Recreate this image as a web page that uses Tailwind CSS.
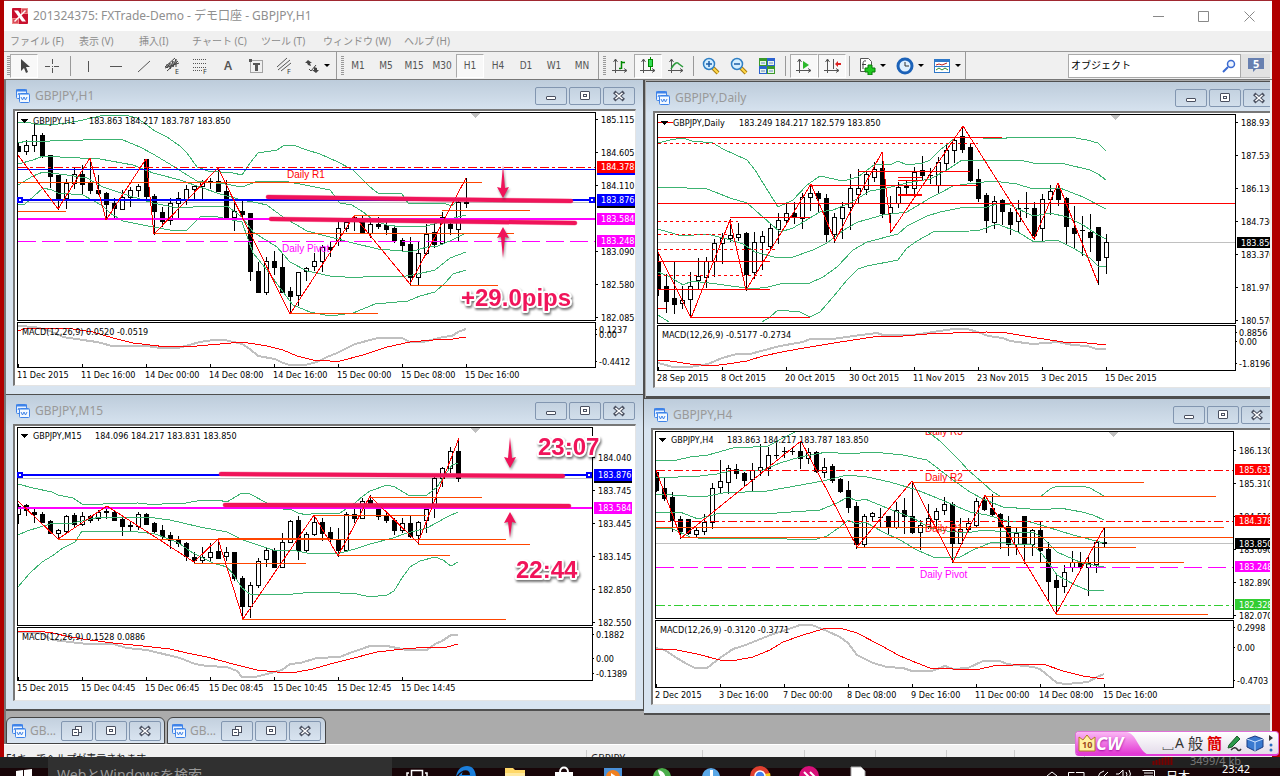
<!DOCTYPE html>
<html lang="ja">
<head>
    <meta charset="UTF-8">
    <meta name="viewport" content="width=device-width, initial-scale=1.0">
    <title>201324375: FXTrade-Demo - GBPJPY,H1</title>
    <script src="https://cdn.jsdelivr.net/npm/@tailwindcss/browser@4"></script>
</head>
<body class="relative h-screen overflow-hidden bg-[#b00000] [font-family:'Noto_Sans','Noto_Sans_CJK_JP',sans-serif]">

    <!-- Shared icons -->
    <svg class="hidden">
        <symbol id="i-chart" viewBox="0 0 14 14">
            <rect x="0.5" y="0.5" width="10" height="9" rx="1" fill="#e8f2ff" stroke="#3f83e8"/>
            <path d="M0 1.5h11" stroke="#3f83e8" stroke-width="2"/>
            <path d="M2 6l1-2 1 2 1-2 1 2 1-1" fill="none" stroke="#3f83e8"/>
            <rect x="3.5" y="4.5" width="10" height="9" rx="1" fill="#f4f9ff" stroke="#3f83e8"/>
            <path d="M4 5.5h9" stroke="#8fbcf5"/>
            <path d="M5 8l1.5 3 1.5-3 1.5 3 1.5-3" fill="none" stroke="#3f83e8"/>
        </symbol>
        <symbol id="i-min" viewBox="0 0 12 12"><rect x="1.5" y="6.5" width="9" height="3" rx="0.5" fill="#fff" stroke="#4a5060"/></symbol>
        <symbol id="i-max" viewBox="0 0 12 12"><rect x="1.5" y="1.5" width="9" height="8" rx="0.5" fill="#fff" stroke="#4a5060"/><rect x="4.5" y="4.5" width="3" height="2" fill="#fff" stroke="#4a5060"/></symbol>
        <symbol id="i-close" viewBox="0 0 12 12"><path d="M2.5 3l7 6M9.5 3l-7 6" stroke="#4a5060" stroke-width="3.6" stroke-linecap="square"/><path d="M2.5 3l7 6M9.5 3l-7 6" stroke="#fff" stroke-width="1.6"/></symbol>
        <symbol id="i-restore" viewBox="0 0 12 12"><rect x="4.5" y="1.5" width="6" height="6" fill="#fff" stroke="#4a5060"/><rect x="1.5" y="4.5" width="6" height="6" fill="#fff" stroke="#4a5060"/><path d="M3 7.5h3" stroke="#4a5060"/></symbol>
        <symbol id="i-axes" viewBox="0 0 18 18"><path d="M4.5 2v14M1 13.5h15M2.5 5l2-3 2 3M13 11.5l3 2-3 2" fill="none" stroke="#555"/></symbol>
        <symbol id="i-lens" viewBox="0 0 18 18"><path d="M11 11l5 5" stroke="#a87c10" stroke-width="4"/><path d="M11 11l5 5" stroke="#ffd84a" stroke-width="2"/><circle cx="7" cy="7" r="5.5" fill="#d4efff" stroke="#2f7fc4" stroke-width="1.5"/></symbol>
    </svg>

    <!-- Terminal window -->
    <div class="ml-1 mr-2 flex h-full flex-col border-t border-[#a02830] bg-[#f0f0f0]">
        <header class="flex h-[30px] shrink-0 items-center bg-white pl-2 text-[#8f8f8f]">
            <svg width="16" height="16" viewBox="0 0 16 16"><rect width="16" height="16" rx="1" fill="#c8102e"/><path d="M0 10h7v6H0zM9 0h7v6H9z" fill="#e88"/><path d="M1 12h5M1 14h5M10 2h5M10 4h5" stroke="#c8102e"/><path d="M2 2.5h4l8 11h-4z" fill="#fff"/><path d="M13.5 2.5L2.5 13.5" stroke="#fff" stroke-width="1.5"/></svg>
            <h1 class="ml-[5px] text-xs">201324375: FXTrade-Demo - デモ口座 - GBPJPY,H1</h1>
            <div class="ml-auto flex">
                <button class="flex h-7 w-[46px] items-center justify-center" aria-label="最小化"><svg width="11" height="11" stroke="#888"><path d="M0 5.5h11"/></svg></button>
                <button class="flex h-7 w-[45px] items-center justify-center" aria-label="最大化"><svg width="11" height="11" fill="none" stroke="#888"><path d="M.5 .5h10v10H.5z"/></svg></button>
                <button class="flex h-7 w-[46px] items-center justify-center" aria-label="閉じる"><svg width="11" height="11" stroke="#888"><path d="M.5 .5l10 10M10.5 .5l-10 10"/></svg></button>
            </div>
        </header>

        <nav class="grid h-5 shrink-0 grid-cols-[69px_60px_53px_69px_62px_81px_60px] items-center pl-1.5 text-[10px] text-[#8c8c8c]">
            <button class="text-left">ファイル (F)</button>
            <button class="text-left">表示 (V)</button>
            <button class="text-left">挿入(I)</button>
            <button class="text-left">チャート (C)</button>
            <button class="text-left">ツール (T)</button>
            <button class="text-left">ウィンドウ (W)</button>
            <button class="text-left">ヘルプ (H)</button>
        </nav>

        <!-- Toolbar -->
        <div class="flex h-[29px] shrink-0 items-center border-t border-b border-t-[#999] border-b-[#777] text-[#555]">
            <i class="ml-[3px] h-5 w-[3px] bg-[repeating-linear-gradient(#999_0_1px,#f0f0f0_1px_2px)]"></i>
            <div class="flex items-center [&_button]:flex [&_button]:h-6 [&_button]:w-7 [&_button]:items-center [&_button]:justify-center">
                <button aria-label="カーソル" class="border border-[#aaa] border-r-white border-b-white bg-[#f8f8f8]"><svg width="18" height="18"><path d="M6 2v12l3-3 2 5 2-1-2-5h4z" fill="#444"/></svg></button>
                <button aria-label="クロスヘア"><svg width="18" height="18" stroke="#555"><path d="M9.5 2v5M9.5 11v5M2 9.5h5M11 9.5h5M9 9.5h1"/></svg></button>
                <i class="mr-[3px] ml-1 h-5 w-px bg-[#999]"></i>
                <button aria-label="垂直線"><svg width="18" height="18" stroke="#555"><path d="M9.5 4v11"/></svg></button>
                <button aria-label="水平線"><svg width="18" height="18" stroke="#555"><path d="M3 9.5h12"/></svg></button>
                <button aria-label="トレンドライン"><svg width="18" height="18" stroke="#555"><path d="M3 15L15 4"/></svg></button>
                <button aria-label="チャネル"><svg width="18" height="20" fill="none" stroke="#444"><path d="M2 11l10-9M4 15l11-10M4 8v4l3-5v6l3-8v6l3-8v8M2 12l14-5"/><text x="12" y="18" font-size="7" fill="#333" stroke="none">E</text></svg></button>
                <button aria-label="フィボナッチ"><svg width="18" height="20" stroke="#555" stroke-dasharray="1 1"><path d="M2 3.5h14M2 7.5h14M2 11.5h14M2 14.5h9"/><text x="12" y="18" font-size="7" fill="#333" stroke="none">F</text></svg></button>
                <button class="text-xs font-semibold">A</button>
                <button aria-label="ラベル"><svg width="18" height="18"><rect x="3.5" y="3.5" width="12" height="12" fill="none" stroke="#555" stroke-dasharray="1 1"/><path d="M2 2h3v3H2z" fill="#555"/><path d="M6 6h7v2h-2v6H8V8H6z" fill="#555"/></svg></button>
                <button aria-label="ファン"><svg width="18" height="20" stroke="#555"><path d="M2 11L12 2M3 14L15 4M6 15L16 7"/><text x="12" y="18" font-size="7" fill="#333" stroke="none">F</text></svg></button>
                <button aria-label="矢印" class="!w-[38px] gap-1"><svg width="16" height="16"><path d="M4 2l4 3-2 0 1 3-3-1-1-2H1zM12 15l-4-3h2V9l3 1v2h2z" fill="#444"/><path d="M5 11l2 2 5-6" fill="none" stroke="#444"/></svg><svg width="6" height="4"><path d="M0 0h6L3 3z"/></svg></button>
            </div>
            <i class="mr-1 h-full w-px bg-[#999]"></i>
            <i class="h-5 w-[3px] bg-[repeating-linear-gradient(#999_0_1px,#f0f0f0_1px_2px)]"></i>
            <div class="flex text-[10px] [font-family:'DejaVu_Sans_Condensed','Noto_Sans',sans-serif] [&_button]:h-6 [&_button]:w-7">
                <button>M1</button><button>M5</button><button>M15</button><button>M30</button>
                <button class="border border-[#aaa] border-r-white border-b-white bg-[#f8f8f8]">H1</button>
                <button>H4</button><button>D1</button><button>W1</button><button>MN</button>
            </div>
            <i class="mr-1 ml-0.5 h-full w-px bg-[#999]"></i>
            <i class="h-5 w-[3px] bg-[repeating-linear-gradient(#999_0_1px,#f0f0f0_1px_2px)]"></i>
            <div class="flex items-center [&_button]:flex [&_button]:h-6 [&_button]:w-7 [&_button]:items-center [&_button]:justify-center">
                <button aria-label="バーチャート"><svg width="18" height="18"><use href="#i-axes"/><path d="M10.5 4v8M8 11.5h2M11 5.5h3" stroke="#080" stroke-width="1.5"/></svg></button>
                <button aria-label="ローソク足" class="border border-[#aaa] border-r-white border-b-white bg-[#f8f8f8]"><svg width="18" height="18"><use href="#i-axes"/><path d="M11.5 0v13" stroke="#080"/><rect x="9.5" y="2.5" width="4" height="7" fill="#3d5" stroke="#080"/></svg></button>
                <button aria-label="ラインチャート"><svg width="18" height="18"><use href="#i-axes"/><path d="M4 12q5-9 8-5l4 3" fill="none" stroke="#2a9a3a" stroke-width="1.5"/></svg></button>
                <i class="mx-[3px] h-5 w-px bg-[#999]"></i>
                <button aria-label="ズームイン"><svg width="18" height="18"><use href="#i-lens"/><path d="M4 7h6M7 4v6" stroke="#1d5fa8" stroke-width="1.5"/></svg></button>
                <button aria-label="ズームアウト"><svg width="18" height="18"><use href="#i-lens"/><path d="M4 7h6" stroke="#1d5fa8" stroke-width="1.5"/></svg></button>
                <button aria-label="整列"><svg width="18" height="18"><path d="M1 1h8v8H1z" fill="#3a9a2a"/><path d="M9 1h8v8H9zM1 9h8v8H1z" fill="#2b62d0"/><path d="M9 9h8v8H9z" fill="#3a9a2a"/><path d="M2 4h6v4H2zM10 4h6v4h-6zM2 12h6v4H2zM10 12h6v4h-6z" fill="#e8f4e8"/><path d="M3 6h4M11 6h4M3 14h4M11 14h4" stroke="#6a8ac0"/></svg></button>
                <i class="mx-1 h-5 w-px bg-[#999]"></i>
                <button aria-label="自動スクロール" class="border border-[#aaa] border-r-white border-b-white bg-[#f8f8f8]"><svg width="18" height="18"><use href="#i-axes"/><path d="M8 4l6 4-6 4z" fill="#2db82d"/></svg></button>
                <button aria-label="チャートシフト" class="border border-[#aaa] border-r-white border-b-white bg-[#f8f8f8]"><svg width="18" height="18"><use href="#i-axes"/><path d="M10.5 2v10" stroke="#555"/><path d="M12 7l3-3v2h3v2h-3v2z" fill="#d22"/></svg></button>
                <i class="mx-[3px] h-5 w-px bg-[#999]"></i>
                <button aria-label="インディケータ" class="!w-[38px] gap-1"><svg width="18" height="18"><path d="M2.5 1.5h8l3 3v10h-11z" fill="#fff" stroke="#555"/><path d="M8 4q-3-1-3 3v5M4 7.5h4" fill="none" stroke="#444"/><path d="M10 8h4v3h3v4h-3v3h-4v-3H7v-4h3z" fill="#1fc81f" stroke="#087808"/></svg><svg width="6" height="4"><path d="M0 0h6L3 3z"/></svg></button>
                <button aria-label="時間足設定" class="!w-[37px] gap-1"><svg width="18" height="18"><circle cx="9" cy="9" r="7" fill="#dff0ff" stroke="#1c62b8" stroke-width="3"/><path d="M9 5v4h4" fill="none" stroke="#333"/></svg><svg width="6" height="4"><path d="M0 0h6L3 3z"/></svg></button>
                <button aria-label="定型チャート" class="!w-[37px] gap-1"><svg width="18" height="16"><rect x="1.5" y="1.5" width="15" height="13" fill="#fff" stroke="#2f78c8"/><path d="M1 2.5h16" stroke="#2f78c8" stroke-width="3"/><path d="M3 7l3-1 3 1 5-2" fill="none" stroke="#b22"/><path d="M3 12l3-2 3 2 3-2 3 2" fill="none" stroke="#2a8a2a"/><path d="M1 8.5h16" stroke="#2f78c8"/></svg><svg width="6" height="4"><path d="M0 0h6L3 3z"/></svg></button>
            </div>
            <i class="h-full w-px bg-[#999]"></i>
            <label class="ml-auto flex h-6 w-[173px] items-center border border-[#aaa] bg-white">
                <input type="text" value="オブジェクト" aria-label="検索" class="w-full min-w-0 flex-1 px-0.5 text-[10px] text-black outline-none">
                <svg class="mr-1 shrink-0" width="14" height="14" fill="none"><circle cx="9" cy="5" r="3.5" fill="#eef4ff" stroke="#3a6ad0" stroke-width="1.5"/><path d="M6 8l-5 5" stroke="#3a6ad0" stroke-width="2"/></svg>
            </label>
            <button aria-label="通知" class="mr-0.5 flex h-6 w-[29px] items-center justify-center border-b border-[#bbb] bg-[#e2e2e2]"><svg width="16" height="16"><path d="M0 1h16v11H8l-3 3v-3H0z" fill="#6880b0"/><text x="5" y="11" font-size="11" font-weight="bold" fill="#fff">5</text></svg></button>
        </div>

        <!-- Chart desktop -->
        <main id="desktop" class="relative mr-0.5 flex-1 overflow-hidden border-l-2 border-[#777] bg-[#ababab]">
            <div class="absolute bottom-0 left-0 flex gap-0.5">
                <section class="flex h-[27px] w-[159px] items-center gap-0.5 rounded-t-md border border-[#444] bg-linear-to-b from-[#c3d0de] to-[#dbe6f2] pl-[5px] text-xs text-[#999]">
                    <svg width="14" height="14"><use href="#i-chart"/></svg><span class="w-[31px] pl-0.5">GB...</span>
                    <button aria-label="元に戻す" class="flex h-5 w-8 items-center justify-center rounded-xs border border-[#8296b0]"><svg width="12" height="12"><use href="#i-restore"/></svg></button>
                    <button aria-label="最大化" class="flex h-5 w-8 items-center justify-center rounded-xs border border-[#8296b0]"><svg width="12" height="12"><use href="#i-max"/></svg></button>
                    <button aria-label="閉じる" class="flex h-5 w-8 items-center justify-center rounded-xs border border-[#8296b0]"><svg width="12" height="12"><use href="#i-close"/></svg></button>
                </section>
                <section class="flex h-[27px] w-[159px] items-center gap-0.5 rounded-t-md border border-[#444] bg-linear-to-b from-[#c3d0de] to-[#dbe6f2] pl-1 text-xs text-[#999]">
                    <svg width="14" height="14"><use href="#i-chart"/></svg><span class="w-[31px] pl-0.5">GB...</span>
                    <button aria-label="元に戻す" class="flex h-5 w-8 items-center justify-center rounded-xs border border-[#8296b0]"><svg width="12" height="12"><use href="#i-restore"/></svg></button>
                    <button aria-label="最大化" class="flex h-5 w-8 items-center justify-center rounded-xs border border-[#8296b0]"><svg width="12" height="12"><use href="#i-max"/></svg></button>
                    <button aria-label="閉じる" class="flex h-5 w-8 items-center justify-center rounded-xs border border-[#8296b0]"><svg width="12" height="12"><use href="#i-close"/></svg></button>
                </section>
            </div>
        </main>

        <footer class="flex h-8 shrink-0 border-t border-white pt-[5px] text-[10px] leading-4 text-[#222]">
            <span class="w-[582px] pl-0.5">F1キーでヘルプが表示されます</span>
            <span class="w-[116px] border-l border-[#ccc] pl-1">GBPJPY</span>
            <span class="w-[102px] border-l border-[#ccc]"></span>
            <span class="w-[71px] border-l border-[#ccc]"></span>
            <span class="w-[71px] border-l border-[#ccc]"></span>
            <span class="w-[68px] border-l border-[#ccc]"></span>
            <span class="w-[70px] border-l border-[#ccc]"></span>
            <span class="flex-1 border-l border-[#ccc]"></span>
        </footer>
    </div>

    <!-- Taskbar -->
    <div class="absolute inset-x-0 bottom-0 flex h-[19px] overflow-hidden bg-[#180508] text-white">
        <div class="absolute inset-x-0 top-0 h-[11px] bg-[#212121]"></div>
        <div class="relative flex w-12 justify-center pt-3"><svg width="16" height="14"><path d="M0 2l7-1v6H0zM8 1l8-1v7H8zM0 8h7v6H0zM8 8h8v6H8z" fill="#fff"/></svg></div>
        <div class="relative w-[344px] bg-[#303030] pt-2 pl-[9px] text-sm text-[#999]">WebとWindowsを検索</div>
        <div class="relative grid w-[490px] grid-cols-10 pt-2 [&_svg]:mx-auto [&_svg]:block [&_svg]:h-6 [&_svg]:w-6">
            <svg viewBox="0 0 24 24" fill="none" stroke="#fff" stroke-width="1.5"><path d="M6.5 5.5h11v14h-11zM4 8H2v10M20 8h2v10"/></svg>
            <svg viewBox="0 0 24 24"><path d="M2 12C3 5 7 1 13 1c6 0 9 5 9 12H8c1 6 8 6 12 4v5C8 26 2 19 4 12c1-2 3-4 5-5-1 1-1 2-1 3h8c0-7-9-6-14 2z" fill="#1b7fdc"/></svg>
            <svg viewBox="0 0 24 24"><path d="M2 3h8l2 2h10v18H2z" fill="#ffd868"/><path d="M2 8h20v15H2z" fill="#ffe9a0"/></svg>
            <svg viewBox="0 0 24 24"><path d="M3 7h18v15H3z" fill="#fff"/><path d="M8 7c0-6 8-6 8 0" fill="none" stroke="#fff" stroke-width="2"/></svg>
            <svg viewBox="0 0 24 24"><path d="M3 3h18v20H3z" fill="#4a90d8"/><circle cx="12" cy="12" r="7" fill="#f08020"/><path d="M10 8l6 4-6 4z" fill="#fff"/></svg>
            <svg viewBox="0 0 24 24"><circle cx="12" cy="12" r="9" fill="#4aae4a"/><path d="M8 5c6 1 8 5 8 12-4-3-7-6-8-12z" fill="#fff"/></svg>
            <svg viewBox="0 0 24 24"><circle cx="12" cy="12" r="9" fill="#5aa8e8"/><path d="M11 5h3v8h-3z" fill="#fff"/></svg>
            <svg viewBox="0 0 24 24"><circle cx="12" cy="11" r="10" fill="#e04030"/><path d="M2 11a10 10 0 0 0 10 10l4-8z" fill="#3aa050"/><path d="M22 8a10 10 0 0 1-10 13l5-12z" fill="#f8c820"/><circle cx="12" cy="11" r="5" fill="#4080f0" stroke="#fff" stroke-width="1.5"/></svg>
            <svg viewBox="0 0 24 24"><circle cx="12" cy="11" r="10" fill="#d8107a"/><path d="M7 7l4 4-4 4M13 7l4 4-4 4" fill="none" stroke="#fff" stroke-width="2"/></svg>
            <svg viewBox="0 0 24 24"><path d="M5 2h10l4 4v17H5z" fill="#fff" stroke="#aaa"/></svg>
        </div>
        <div class="relative ml-auto flex w-[240px] text-xs leading-5">
            <span class="absolute -top-0.5 left-[150px] text-[11px] leading-none text-[#777]">3499/4 kb</span>
            <svg class="absolute top-0 left-[112px]" width="26" height="8"><path d="M1.5 4v4M4.5 3v5M7.5 2v6M10.5 1v7M13.5 0v8M16.5 0v8M19.5 0v8" stroke="#700" stroke-width="2"/></svg>
            <svg class="absolute top-3 left-1.5" width="120" height="8" fill="none" stroke="#fff"><path d="M1 7l5-4 5 4M22.5 8V3.5h6M30 3.5h8V8M52 8q1-5 6-6M57 8l5-5M70 5h3l4-4v8M80 3q2 3 0 5M83 1q3 4 0 8"/><path d="M96.5 1.5h12V8M98 4h9M98 7h9"/></svg>
            <span class="absolute top-2.5 left-[126px]">日本</span>
            <time class="absolute top-0.5 left-[182px] text-[11px]">23:42</time>
        </div>
    </div>

    <!-- Input method bar -->
    <div class="absolute right-px bottom-5 flex h-[25px] w-[204px] items-center overflow-hidden rounded border border-[#e070d8] border-b-2 border-b-[#e23ad8] bg-linear-to-b from-white to-[#e4dcea]">
        <svg class="absolute inset-0" width="80" height="24">
            <defs><linearGradient id="pink" x2="0" y2="1"><stop stop-color="#fbb8f4"/><stop offset="1" stop-color="#e02cd0"/></linearGradient></defs>
            <path d="M0 0h50c12 1 12 22 26 24H0z" fill="url(#pink)"/>
        </svg>
        <div class="relative flex h-full w-[62px] items-center pl-0.5">
            <svg width="18" height="20"><path d="M1 4l4 3 4-5 4 5 4-3v14H1z" fill="#fff0a0" stroke="#b08020"/><text x="4" y="15" font-size="9" font-weight="bold" fill="#a04a20">10</text></svg>
            <b class="text-lg leading-none text-white italic [text-shadow:0_1px_2px_#a010a0]">CW</b>
        </div>
        <div class="relative flex flex-1 items-center justify-end gap-1 pr-1 text-[15px] leading-none text-[#333]">
            <span class="text-sm">␣A</span><span>般</span><b class="text-[#e00000]">簡</b>
            <svg width="16" height="18"><path d="M3 11L11 2l3 3-8 8-4 1z" fill="#2a9a4a" stroke="#1a5a2a"/><path d="M5 16q4-4 6-1t4 0" fill="none" stroke="#333" stroke-width="1.5"/></svg>
            <svg width="18" height="18"><path d="M1 5l8-3 8 3v8l-8 4-8-4z" fill="#3a7ad0" stroke="#1a3a80"/><path d="M1 5l8 3 8-3M9 8v9" fill="none" stroke="#cfe4ff"/></svg>
            <svg width="6" height="20"><path d="M1 2l4 3-4 3z" fill="#333"/><circle cx="3" cy="12" r="1.5" fill="#2a6ac0"/><circle cx="3" cy="17" r="1.5" fill="#2a6ac0"/></svg>
        </div>
    </div>

    <!-- Chart window, cloned once per chart -->
    <template id="window-template">
        <section class="absolute flex h-[316px] w-[639px] flex-col border-r-2 border-b-2 border-[#4f4f4f] bg-[#d8e4f0] bg-linear-to-b from-[#bdccdb] from-0% to-[#d8e4f0] to-10% shadow-[0_-1px_0_#4f4f4f]">
            <div class="flex h-[29px] shrink-0 items-center pt-0.5 pr-2 pl-2.5">
                <svg width="14" height="14"><use href="#i-chart"/></svg>
                <h2 class="ml-[5px] flex-1 text-xs text-[#999]"></h2>
                <div class="flex gap-0.5">
                    <button aria-label="最小化" class="flex h-[18px] w-8 items-center justify-center rounded-xs border border-[#8296b0]"><svg width="12" height="12"><use href="#i-min"/></svg></button>
                    <button aria-label="最大化" class="flex h-[18px] w-8 items-center justify-center rounded-xs border border-[#8296b0]"><svg width="12" height="12"><use href="#i-max"/></svg></button>
                    <button aria-label="閉じる" class="flex h-[18px] w-8 items-center justify-center rounded-xs border border-[#8296b0]"><svg width="12" height="12"><use href="#i-close"/></svg></button>
                </div>
            </div>
            <div class="ml-[7px] w-[623px] border-t-2 border-l-2 border-[#777] border-r border-b border-r-[#e4e4e4] border-b-[#e4e4e4] bg-white">
                <svg data-chart class="block text-[9px] [font-family:'DejaVu_Sans_Condensed','Noto_Sans',sans-serif]" width="620" height="274"></svg>
            </div>
        </section>
    </template>

    <script>
        // Bars are [high, body top, body bottom, low, filled]; all values are desktop pixels.
        // Lines are [colour, y, x1, x2, style]; styles: 1 thick, 'dd' dash-dot, 'd' short dash, 'l' long dash
        const O = '#ff4500', R = '#ff0000', M = '#ff00ff', B = '#0000ff', G = '#c0c0c0';
        const charts = [
            {
                title: 'GBPJPY,H1', quote: '183.863 184.217 183.787 183.850', quoteX: 89, left: 0, top: 0, ox: 15, oy: 111,
                frame: [17, 112, 595, 320, 322, 367], x0: 18, marker: 475,
                bars: [[142,146,151,151,1],[140,145,151,154,0],[124,135,145,151,0],[133,135,156,157,1],[155,155,176,187,1],[175,175,199,209,1],[179,183,198,208,0],[168,174,183,188,0],[165,174,184,193,1],[158,182,190,193,1],[175,190,193,194,1],[192,193,204,219,1],[198,203,208,218,1],[190,197,209,209,0],[187,190,197,206,0],[184,186,190,196,0],[159,159,196,200,1],[194,196,211,234,1],[207,212,221,226,1],[198,203,220,224,0],[192,198,203,218,0],[185,189,199,204,0],[185,186,189,200,0],[180,182,186,199,0],[178,181,182,188,1],[167,181,191,191,1],[180,191,218,218,1],[200,211,217,230,0],[199,211,214,217,1],[213,213,271,280,1],[262,271,292,292,1],[257,261,292,294,0],[251,261,267,274,1],[253,267,292,292,1],[287,291,296,313,1],[272,272,295,305,0],[267,268,271,280,0],[253,261,266,270,0],[245,247,261,271,0],[242,247,249,256,1],[221,228,241,245,0],[221,222,228,231,0],[215,217,218,230,1],[216,222,233,233,1],[221,224,233,237,0],[217,224,226,228,1],[221,225,229,234,1],[226,228,240,242,1],[238,240,245,251,1],[237,244,277,284,1],[241,253,277,284,0],[224,234,253,254,0],[222,232,244,247,1],[212,217,243,244,0],[219,224,228,234,1],[201,202,229,241,0],[178,202,203,207,1]],
                zigzag: '18,155 58,209 90,158 106,220 146,159 154,234 218,168 290,314 354,216 410,284 466,178',
                bands: [
                    '18,123 27,122 35,124 50,125 67,123 83,120 100,116 113,115 125,115 137,118 147,125 155,131 167,137 180,146 187,153 197,167 208,171 233,173 242,175 250,163 258,153 277,150 283,146 293,145 307,150 320,154 338,162 353,170 370,187 378,193 402,194 408,203 418,204 435,203 443,203 452,206 458,200 466,201',
                    '18,143 27,141 50,141 83,140 100,139 123,140 140,147 153,154 173,166 187,175 197,181 207,182 225,184 242,187 258,181 283,181 300,184 330,190 340,203 352,205 363,212 375,221 387,225 402,227 427,226 437,223 450,219 466,215',
                    '18,164 33,160 43,156 60,157 100,159 133,165 153,173 180,180 200,187 220,194 242,200 258,203 267,205 283,217 307,231 330,237 353,243 378,249 402,251 410,252 427,247 438,246 452,240 466,233',
                    '18,185 33,176 43,172 67,175 87,178 103,187 130,196 153,203 173,207 187,208 200,206 227,206 242,217 253,232 277,247 290,262 307,271 330,276 345,277 363,277 378,276 400,277 418,274 435,270 450,258 466,252',
                    '18,204 25,204 43,188 52,190 58,193 83,195 92,200 103,206 110,213 123,221 153,227 170,230 187,230 200,217 213,216 242,222 253,253 267,270 283,292 293,305 310,312 330,316 353,313 375,304 408,301 420,296 435,292 445,283 453,274 466,270'],
                lines: [[R,167,18,595,'dd'],[B,169,18,595],[O,182,18,482],[O,211,18,66],[G,202,18,595],[O,233,154,514],[M,241,18,595,'l'],[O,313,290,378],[O,285,410,498],[O,215,354,442],[O,210,442,530],[B,199,18,592,1],[M,218,18,595,1]],
                handles: [[20, 200], [592, 200]],
                macd: '18,326 35,327 50,331 63,337 83,340 97,342 112,346 147,346 160,348 178,348 200,342 213,340 225,340 242,344 250,349 258,356 275,359 283,363 290,365 305,365 317,362 327,357 337,353 355,344 378,338 402,338 410,342 423,342 435,339 443,337 452,336 458,332 466,329',
                signal: '18,331 27,328 53,328 73,329 93,332 113,338 133,343 167,347 197,346 220,344 242,342 267,346 283,350 297,356 313,360 330,361 340,361 363,355 387,347 410,342 433,340 453,339 466,337',
                macdText: 'MACD(12,26,9) 0.0520 -0.0519',
                prices: [['185.115',119],['184.605',152],['184.110',185],['183.090',251],['182.580',284],['182.085',317]],
                levels: [['0.1237',329],['0.00',334],['-0.4412',361]],
                tags: [[B,'',169,6],['#000','',202,6],[R,'184.378',161,12],[B,'183.876',194,12],[M,'183.584',213,12],[M,'183.248',235,12]],
                notes: [['Daily R1', 287, 178, R], ['Daily Pivot', 282, 252, M]],
                dates: ['11 Dec 2015','11 Dec 16:00','14 Dec 00:00','14 Dec 08:00','14 Dec 16:00','15 Dec 00:00','15 Dec 08:00','15 Dec 16:00'],
                strokes: [[268,197,571,201],[271,219,575,223]],
                arrows: [[503,165,198],[503,258,227]],
                labels: [['+29.0pips', 461, 306]]
            },
            {
                title: 'GBPJPY,Daily', quote: '183.249 184.217 182.579 183.850', quoteX: 739, left: 640, top: 2, ox: 655, oy: 113,
                frame: [657, 114, 1235, 323, 325, 370], x0: 658, marker: 1115,
                bars: [[254,262,288,295,1],[274,286,301,312,1],[262,298,304,313,1],[286,300,303,308,0],[272,286,299,317,0],[258,276,280,289,0],[257,261,277,287,0],[239,243,261,276,0],[233,238,243,263,0],[219,235,238,241,0],[223,234,237,240,0],[232,233,274,290,1],[232,242,272,278,0],[231,236,242,269,0],[223,228,246,249,0],[213,220,229,243,0],[202,213,220,223,0],[202,213,217,223,1],[193,197,218,228,0],[184,193,197,210,0],[191,193,198,212,1],[194,198,234,241,1],[213,217,234,242,0],[202,207,218,238,0],[174,188,207,229,0],[169,188,194,203,0],[172,174,189,194,0],[162,169,177,181,0],[152,168,213,217,1],[196,207,213,232,0],[182,187,203,207,0],[180,186,187,194,1],[167,172,188,194,0],[156,170,175,180,1],[168,175,175,183,1],[157,162,185,193,0],[145,150,163,170,0],[138,140,150,162,0],[126,136,149,152,1],[143,147,180,181,1],[169,179,198,201,1],[193,195,220,232,1],[196,201,222,228,0],[199,200,211,224,1],[208,212,224,234,1],[200,208,221,231,0],[192,208,208,217,1],[202,208,235,239,1],[194,199,228,240,0],[185,191,199,214,0],[183,189,199,205,1],[197,198,226,244,1],[206,228,233,247,1],[216,230,230,255,1],[214,232,237,251,1],[227,227,260,284,1],[234,242,257,273,0]],
                zigzag: '658,252 691,318 730,220 746,290 811,184 835,241 882,152 891,232 963,126 1034,239 1058,183 1098,283',
                bands: [
                    '658,143 670,140 683,138 692,141 713,143 723,149 747,160 755,170 763,183 778,207 793,200 807,185 820,176 843,181 858,177 875,164 890,165 898,161 907,165 923,163 930,160 940,150 955,138 970,137 995,139 1018,137 1070,137 1087,140 1098,143 1106,151',
                    '658,187 667,187 707,189 715,192 730,198 747,203 755,210 780,232 793,228 820,212 833,210 850,203 870,191 887,188 907,183 930,179 947,170 962,160 987,160 1020,160 1033,163 1065,164 1090,170 1098,174 1106,180',
                    '658,229 682,236 707,234 727,239 743,244 755,252 778,258 793,257 813,250 827,243 847,228 858,222 883,215 907,212 930,198 940,193 953,186 967,184 993,181 1017,184 1033,189 1060,188 1083,197 1106,209',
                    '658,272 670,277 683,285 692,281 717,284 753,289 768,287 780,284 810,283 823,277 837,267 853,250 867,242 898,234 907,226 927,216 940,212 960,208 987,207 1000,203 1010,205 1033,216 1050,213 1067,217 1083,225 1098,235 1106,239',
                    '658,315 669,322',
                    '762,322 770,317 778,310 800,312 810,317 820,312 833,297 847,280 858,269 867,266 898,260 907,248 917,241 933,232 970,231 980,230 997,224 1018,232 1034,242 1057,240 1073,248 1090,258 1098,266 1106,267'],
                lines: [[G,242,658,1235],[R,122,658,673],[R,137,658,1002],[R,143,658,978,'d'],[R,171,858,970],[R,185,810,978],[R,203,658,1235],[R,217,730,810],[R,221,658,738,'d'],[R,234,658,730,'d'],[R,249,658,775,'d'],[R,275,658,762,'d'],[R,261,658,770],[R,289,658,770],[R,308,658,666],[R,317,690,810],[R,177,898,922],[R,180,898,922],[R,194,898,922,1]],
                handles: [],
                macd: '658,363 673,367 690,367 708,364 722,358 737,354 750,354 780,346 803,342 810,339 833,339 853,336 877,333 883,335 913,335 933,332 953,329 967,329 978,332 988,336 1003,338 1010,341 1033,344 1058,342 1073,345 1087,346 1097,349 1106,349',
                signal: '658,360 670,361 690,364 712,366 727,364 747,361 763,356 787,351 810,347 840,342 873,337 903,336 927,334 953,333 987,332 1007,333 1037,338 1063,342 1087,343 1106,345',
                macdText: 'MACD(12,26,9) -0.5177 -0.2734',
                prices: [['188.930',122],['187.530',155],['186.130',188],['184.730',221],['183.370',254],['181.970',287],['180.570',320]],
                levels: [['0.8856',332],['0.00',341],['-1.8196',363]],
                tags: [['#000','183.850',237,11]],
                notes: [],
                dates: ['28 Sep 2015','8 Oct 2015','20 Oct 2015','30 Oct 2015','11 Nov 2015','23 Nov 2015','3 Dec 2015','15 Dec 2015'],
                strokes: [], arrows: [], labels: []
            },
            {
                title: 'GBPJPY,M15', quote: '184.096 184.217 183.831 183.850', quoteX: 95, left: 0, top: 315, ox: 15, oy: 426,
                frame: [17, 427, 592, 625, 627, 680], x0: 18, marker: 475,
                bars: [[504,506,514,523,0],[504,505,510,515,1],[508,512,514,522,1],[512,514,522,522,1],[520,521,533,533,1],[529,530,533,539,0],[515,516,531,532,0],[513,515,524,527,1],[512,516,524,525,0],[515,516,520,522,1],[510,512,518,520,0],[507,511,512,518,1],[510,512,520,520,1],[518,519,526,535,1],[521,525,526,530,1],[512,514,526,529,0],[513,514,524,524,1],[522,523,531,533,1],[525,530,536,539,1],[532,535,540,548,1],[536,539,543,546,1],[542,543,556,560,1],[552,557,560,562,1],[547,557,560,562,0],[543,552,557,560,0],[538,551,558,558,1],[547,552,556,560,0],[552,552,578,580,1],[576,578,606,619,1],[582,585,606,617,0],[558,561,585,587,0],[547,550,559,566,0],[548,550,567,567,1],[533,542,567,567,0],[520,521,542,542,0],[516,520,550,559,1],[532,534,550,552,0],[515,522,534,535,0],[518,522,533,540,1],[527,532,539,542,1],[528,539,550,556,1],[512,514,550,550,0],[508,514,518,522,1],[498,501,518,518,0],[495,500,506,507,1],[507,508,516,519,1],[512,515,520,522,1],[518,520,530,534,1],[518,523,530,532,0],[516,523,536,537,1],[521,522,535,543,0],[507,509,520,532,0],[475,478,508,517,0],[467,468,478,486,0],[447,451,468,472,0],[438,451,478,481,1]],
                zigzag: '18,501 58,539 107,506 194,562 218,539 243,619 314,515 338,556 370,496 418,543 459,438',
                bands: [
                    '18,484 33,488 52,492 58,495 73,498 82,504 103,504 138,503 155,505 170,503 180,504 197,501 218,500 227,502 242,493 250,494 267,503 283,509 290,509 298,513 307,515 315,513 340,513 355,503 363,496 370,491 387,485 395,487 403,492 410,496 427,495 437,487 445,475 452,465 458,463',
                    '18,535 27,531 50,524 73,523 100,517 147,517 170,520 200,527 227,532 243,540 273,550 297,551 307,553 340,553 355,549 370,544 393,538 407,533 427,528 447,517 458,512',
                    '18,587 30,573 42,562 52,556 63,548 75,542 82,531 130,531 155,534 177,542 193,553 213,563 227,567 233,574 242,588 250,594 293,594 313,592 340,593 357,594 370,597 387,595 394,591 402,578 410,567 420,561 435,557 443,560 451,566 458,562'],
                lines: [[G,478,18,592],[O,539,58,506],[O,538,218,330,1],[O,563,194,306],[O,619,242,506],[O,515,314,426],[O,555,338,450],[O,497,370,482],[O,544,418,530],[B,474,18,592,1],[M,507,18,592,1]],
                handles: [[20, 475], [589, 475]],
                macd: '18,632 40,633 53,640 70,642 87,644 113,644 127,648 147,650 180,658 195,664 207,666 227,667 237,671 242,677 255,677 267,674 282,670 290,664 300,663 317,658 340,657 347,654 370,646 387,646 407,650 427,650 435,644 442,641 451,635 458,635',
                signal: '18,631 37,631 53,633 70,637 90,640 113,643 143,646 170,649 187,653 207,657 233,664 257,670 277,672 297,672 313,669 330,664 350,659 377,652 403,649 430,647 447,647 458,644',
                macdText: 'MACD(12,26,9) 0.1528 0.0886',
                prices: [['184.040',457],['183.745',490],['183.445',523],['183.145',556],['182.850',589],['182.550',622]],
                levels: [['0.1882',634],['0.00',658],['-0.1389',673]],
                tags: [['#000','183.850',472,11],[B,'183.876',469,12],[M,'183.584',502,12]],
                notes: [],
                dates: ['15 Dec 2015','15 Dec 04:45','15 Dec 06:45','15 Dec 08:45','15 Dec 10:45','15 Dec 12:45','15 Dec 14:45'],
                strokes: [[221,474,563,476],[225,505,569,506]],
                arrows: [[510,437,468],[510,538,512]],
                labels: [['23:07', 538, 455], ['22:44', 516, 578]]
            },
            {
                title: 'GBPJPY,H4', quote: '183.863 184.217 183.787 183.850', quoteX: 727, left: 638, top: 319, ox: 653, oy: 430,
                frame: [655, 431, 1233, 618, 620, 687], x0: 656, marker: 1113,
                bars: [[471,472,490,491,1],[478,488,498,500,1],[492,497,520,531,1],[516,519,531,538,1],[519,519,533,534,1],[527,530,534,537,0],[514,522,531,534,0],[483,488,522,528,0],[460,481,487,493,0],[465,468,482,493,0],[464,469,473,478,1],[472,473,480,486,1],[463,470,479,491,0],[444,467,470,475,0],[447,455,468,475,0],[443,455,455,458,1],[447,451,451,457,1],[448,451,451,454,1],[441,451,458,468,1],[448,452,458,463,0],[451,452,471,472,1],[458,467,472,477,0],[464,466,480,482,1],[478,479,491,492,1],[481,490,507,512,1],[502,506,544,548,1],[514,516,544,546,0],[512,513,516,521,0],[508,517,517,527,1],[516,516,527,534,1],[502,510,527,528,0],[498,510,516,533,1],[481,516,532,533,1],[520,525,532,549,0],[504,518,526,528,0],[508,511,519,527,0],[497,504,510,514,0],[502,504,543,562,1],[518,529,543,543,0],[518,523,529,532,0],[498,501,525,526,0],[495,500,509,510,1],[494,508,514,516,1],[513,514,527,548,1],[516,526,544,555,1],[528,533,544,554,0],[516,516,544,563,1],[529,530,544,555,0],[522,530,550,561,1],[542,549,581,600,1],[573,580,587,613,1],[565,572,586,592,0],[551,562,567,571,0],[552,562,567,568,1],[556,563,567,595,0],[541,542,564,572,0],[528,542,543,546,1]],
                zigzag: '656,470 681,538 801,441 857,547 912,481 953,562 985,495 1056,614 1104,528',
                bands: [
                    '656,460 677,460 690,457 708,455 733,448 753,447 768,446 787,436 797,431',
                    '928,432 940,441 952,453 960,461 968,470 983,483 993,492 1000,496 1040,497 1050,489 1057,486 1082,486 1090,488 1104,496',
                    '656,478 700,476 717,474 730,471 763,470 780,463 800,457 827,452 848,454 873,452 903,455 927,460 940,470 953,480 970,492 983,499 1003,507 1043,510 1060,508 1082,512 1093,515 1104,520',
                    '656,494 703,497 723,493 767,491 790,487 823,481 847,475 867,477 890,482 917,490 937,498 970,512 987,515 1007,521 1027,521 1047,527 1073,535 1104,543',
                    '656,512 680,512 698,519 720,513 777,513 820,510 837,503 848,497 857,501 865,499 887,508 913,518 930,528 947,531 967,533 983,530 1007,532 1033,532 1043,538 1057,552 1082,563 1104,567',
                    '656,528 673,529 690,537 707,539 723,538 760,538 787,539 817,539 827,536 840,527 848,520 857,524 865,522 883,532 900,540 917,550 933,557 960,557 973,550 990,543 1000,542 1017,545 1032,544 1043,555 1057,575 1075,585 1087,590 1104,590'],
                lines: [[G,543,656,1233],[R,470,656,1233,'dd'],[O,482,912,1144],[O,496,985,1216],[R,521,656,1233,'dd'],[O,527,656,1224],[O,537,681,1233],[O,547,857,1136],[O,562,953,1184],[M,567,656,1233,'l'],['#32cd32',605,656,1233,'dd'],[O,614,1056,1208]],
                handles: [],
                macd: '656,648 665,650 675,657 687,664 695,668 707,668 720,658 733,649 743,646 773,634 783,631 800,625 812,625 827,631 840,637 848,643 857,655 873,663 887,667 903,668 912,671 932,671 945,666 953,669 968,668 983,661 1000,661 1007,664 1033,667 1040,669 1057,683 1067,684 1088,682 1097,677 1104,674',
                signal: '656,649 677,650 697,654 720,660 737,660 753,657 770,650 783,642 803,635 823,629 840,628 857,633 880,645 900,656 917,663 930,668 953,669 980,669 993,666 1013,665 1043,664 1063,671 1083,676 1104,679',
                macdText: 'MACD(12,26,9) -0.3120 -0.3771',
                prices: [['186.130',450],['185.310',483],['184.510',516],['183.690',549],['182.890',582],['182.070',615]],
                levels: [['0.2998',627],['0.00',647],['-0.4703',680]],
                tags: [[R,'185.631',464,11],[R,'184.378',515,11],['#000','183.850',538,11],[M,'183.248',561,11],['#32cd32','182.328',599,11]],
                notes: [['Daily R3', 925, 435, R], ['Daily R2', 925, 481, R], ['Daily R1', 925, 532, R], ['Daily Pivot', 920, 578, M]],
                dates: ['2 Dec 2015','3 Dec 16:00','7 Dec 00:00','8 Dec 08:00','9 Dec 16:00','11 Dec 00:00','14 Dec 08:00','15 Dec 16:00'],
                strokes: [], arrows: [], labels: []
            }
        ];

        const dashes = { dd: '9 3 3 3', d: '3 3', l: '18 6' };

        function line([color, y, x1, x2, style]) {
            const thick = style === 1;
            const mid = thick ? y + 1 : y + 0.5;
            return `<path d="M${x1} ${mid}H${x2}" stroke="${color}" stroke-width="${thick ? 2 : 1}" stroke-dasharray="${dashes[style] || 'none'}"/>`;
        }

        function bar([high, top, bottom, low, filled], x) {
            const wick = `<path d="M${x + 0.5} ${high}V${low + 1}" stroke="#000"/>`;
            return wick + (filled
                ? `<rect x="${x - 2}" y="${top}" width="5" height="${bottom - top + 1}"/>`
                : `<rect x="${x - 1.5}" y="${top + 0.5}" width="4" height="${bottom - top}" fill="#fff" stroke="#000"/>`);
        }

        function arrow([x, tail, head]) {
            const s = head > tail ? -1 : 1;
            return `<path d="M${x} ${tail}L${x + 2} ${head + s * 10}L${x + 6} ${head + s * 11}L${x} ${head}L${x - 6} ${head + s * 11}L${x - 2} ${head + s * 10}Z" fill="#f0145a"/>`;
        }

        function drawChart(c) {
            const [l, t, r, b, mt, mb] = c.frame;
            const poly = (points, color, width) => `<polyline points="${points}" fill="none" stroke="${color}" stroke-width="${width}"/>`;
            const text = (s, x, y, color) => `<text x="${x}" y="${y}" fill="${color || '#000'}">${s}</text>`;
            return `
                <defs><clipPath id="clip-${c.title}"><rect x="${l}" y="${t}" width="${r - l}" height="${b - t}"/></clipPath></defs>
                <g shape-rendering="crispEdges" clip-path="url(#clip-${c.title})">
                    ${c.lines.filter(n => n[0] === G).map(line).join('')}
                    ${c.bars.map((v, i) => bar(v, c.x0 + i * 8)).join('')}
                    ${c.bands.map(p => poly(p, '#3cb371', 1)).join('')}
                    ${c.lines.filter(n => n[0] !== G).map(line).join('')}
                    ${poly(c.zigzag, R, 1)}
                    <path d="M${c.marker - 5} ${t + 1}h10l-5 5z" fill="#c0c0c0"/>
                </g>
                <g clip-path="url(#clip-${c.title})" font-family="Liberation Sans" font-size="10">${c.notes.map(n => text(...n)).join('')}</g>
                <g shape-rendering="crispEdges">
                    ${poly(c.macd, G, 2)}${poly(c.signal, R, 1)}
                    <path d="M${l + 0.5} ${t + 0.5}H${r + 0.5}V${b + 0.5}H${l + 0.5}ZM${l + 0.5} ${mt + 0.5}H${r + 0.5}V${mb + 0.5}H${l + 0.5}Z" fill="none" stroke="#000"/>
                    ${c.handles.map(([x, y]) => `<rect x="${x - 2}" y="${y - 2}" width="4" height="4" fill="#fff" stroke="#00f" stroke-width="2"/>`).join('')}
                    ${c.prices.map(p => `<path d="M${r} ${p[1] + 0.5}h3" stroke="#000"/>`).join('')}
                    ${c.levels.map(p => `<path d="M${r} ${p[1] + 0.5}h2" stroke="#000"/>`).join('')}
                    ${c.dates.map((d, i) => `<path d="M${c.x0 + i * 64 + 0.5} ${mb - 3}v3" stroke="#000"/>`).join('')}
                    <path d="M${l + 4} ${t + 7}h7l-3.5 4z"/>
                </g>
                ${text(c.title, l + 16, t + 12)}${text(c.quote, c.quoteX, t + 12)}
                ${text(c.macdText, l + 5, mt + 13)}
                ${c.prices.map(p => text(p[0], r + 6, p[1] + 4)).join('')}
                ${c.levels.map(p => text(p[0], r + 4, p[1] + 4)).join('')}
                ${c.tags.map(([color, s, y, h]) => `<rect x="${r + 2}" y="${y}" width="38" height="${h}" fill="${color}"/>` + text(s, r + 6, y + 9, '#fff')).join('')}
                ${c.dates.map((d, i) => text(d, c.x0 - 1 + i * 64, mb + 11)).join('')}
                ${c.strokes.map(([x1, y1, x2, y2]) => `<path d="M${x1} ${y1}L${x2} ${y2}" stroke="#f0145a" stroke-opacity=".4" stroke-width="5" stroke-linecap="round"/><path d="M${x1} ${y1}L${x2} ${y2}" stroke="#f0145a" stroke-width="4" stroke-linecap="round"/>`).join('')}
                <g style="filter:drop-shadow(1px 2px 1px #0006)">${c.arrows.map(arrow).join('')}</g>
                <g font-family="Liberation Sans" font-size="24" font-weight="bold" fill="#f0145a" stroke="#fff" stroke-width="4" paint-order="stroke" stroke-linejoin="round" style="filter:drop-shadow(1px 2px 1px #0008)">
                    ${c.labels.map(([s, x, y]) => `<text x="${x}" y="${y}">${s}</text>`).join('')}
                </g>`;
        }

        const desktop = document.getElementById('desktop');
        const template = document.getElementById('window-template');
        for (const c of charts) {
            const win = template.content.firstElementChild.cloneNode(true);
            win.style.left = c.left + 'px';
            win.style.top = c.top + 'px';
            win.querySelector('h2').textContent = c.title;
            const svg = win.querySelector('[data-chart]');
            svg.setAttribute('viewBox', `${c.ox} ${c.oy} 620 274`);
            svg.innerHTML = drawChart(c);
            desktop.append(win);
        }
    </script>
</body>
</html>
